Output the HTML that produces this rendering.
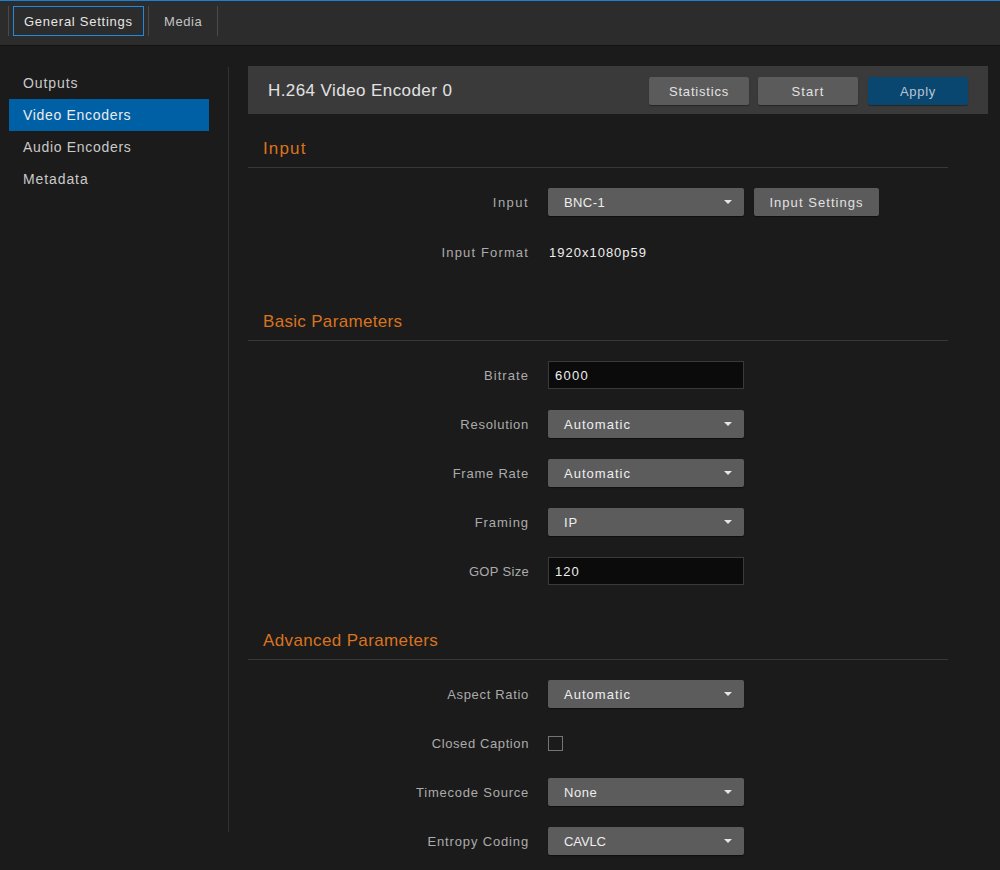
<!DOCTYPE html>
<html>
<head>
<meta charset="utf-8">
<style>
html,body{margin:0;padding:0;}
body{width:1000px;height:870px;overflow:hidden;background:#1b1b1b;position:relative;font-family:"Liberation Sans",sans-serif;}
.a{position:absolute;}
.topline{left:0;top:0;width:1000px;height:1px;background:#1b80d4;}
.hshadow{left:0;top:45px;width:1000px;height:1px;background:#131313;}
.header{left:0;top:1px;width:1000px;height:44px;background:#2c2c2c;}
.hdiv{top:6px;width:1px;height:30px;background:#4a4a4a;}
.tab{top:6px;height:30px;line-height:30px;font-size:13px;color:#e6e6e6;white-space:nowrap;}
.tab1{left:13px;width:129px;border:1px solid #1f8ae0;height:28px;line-height:28px;}
.side{left:9px;width:200px;height:32px;line-height:32px;font-size:14px;color:#c9c9c9;white-space:nowrap;}
.side span{position:absolute;left:14px;top:0;letter-spacing:0.9px;}
.side.act{background:#0060a6;color:#ececec;}
.vdiv{left:228px;top:67px;width:1px;height:765px;background:#333;}
.titlebar{left:248px;top:66px;width:740px;height:48px;background:#3a3a3a;}
.title{left:268px;top:67px;height:48px;line-height:48px;font-size:17px;color:#e2e2e2;letter-spacing:0.42px;white-space:nowrap;}
.btn{top:77px;width:100px;height:28px;line-height:28px;border-radius:2px;background:#5b5b5b;color:#e2e2e2;font-size:13px;text-align:center;white-space:nowrap;box-shadow:0 1px 1px rgba(0,0,0,.35);}
.btn span{letter-spacing:0.7px;position:relative;top:1px;}
.btn.apply{background:#0a4770;color:#b9c6d2;}
.h2{left:263px;font-size:17px;color:#d9731f;white-space:nowrap;letter-spacing:0.4px;height:20px;line-height:20px;}
.hline{left:248px;width:700px;height:1px;background:#383838;}
.lbl{margin-top:1px;right:471px;font-size:13px;color:#ababab;text-align:right;white-space:nowrap;letter-spacing:0.7px;height:28px;line-height:28px;}
.sel{left:548px;width:196px;height:28px;border-radius:2px;background:#5c5c5c;box-shadow:0 1px 1px rgba(0,0,0,.45);}
.sel span{position:absolute;left:16px;top:1px;line-height:28px;font-size:13px;color:#eeeeee;white-space:nowrap;letter-spacing:0.9px;}
.sel i{position:absolute;left:176px;top:12px;width:0;height:0;border-left:4px solid transparent;border-right:4px solid transparent;border-top:4px solid #e6e6e6;}
.inp{left:548px;width:194px;height:26px;border:1px solid #3a3a3a;background:#0b0b0b;}
.inp span{position:absolute;left:6px;top:1px;line-height:26px;font-size:13px;color:#eeeeee;white-space:nowrap;letter-spacing:1px;}
.val{left:549px;font-size:13px;color:#eeeeee;white-space:nowrap;letter-spacing:0.9px;height:28px;line-height:28px;}
.chk{left:548px;top:736px;width:13px;height:13px;border:1px solid #747474;}
.ibtn{left:754px;top:188px;width:125px;height:28px;line-height:28px;border-radius:2px;background:#5b5b5b;color:#e2e2e2;font-size:13px;text-align:center;white-space:nowrap;box-shadow:0 1px 1px rgba(0,0,0,.45);}
.ibtn span{letter-spacing:0.9px;position:relative;top:1px;}
</style>
</head>
<body>
<div class="a topline"></div>
<div class="a header"></div>
<div class="a hshadow"></div>
<div class="a hdiv" style="left:8px"></div>
<div class="a tab tab1"><span style="position:absolute;left:10px;top:1px;letter-spacing:0.75px">General Settings</span></div>
<div class="a hdiv" style="left:148px"></div>
<div class="a tab" style="top:7px;left:164px;letter-spacing:0.55px;color:#c4c4c4">Media</div>
<div class="a hdiv" style="left:217px"></div>

<div class="a side" style="top:67px"><span>Outputs</span></div>
<div class="a side act" style="top:99px"><span style="letter-spacing:0.69px">Video Encoders</span></div>
<div class="a side" style="top:131px"><span style="letter-spacing:0.69px">Audio Encoders</span></div>
<div class="a side" style="top:163px"><span>Metadata</span></div>
<div class="a vdiv"></div>

<div class="a titlebar"></div>
<div class="a title">H.264 Video Encoder 0</div>
<div class="a btn" style="left:649px"><span style="letter-spacing:0.81px">Statistics</span></div>
<div class="a btn" style="left:758px"><span style="letter-spacing:1.12px">Start</span></div>
<div class="a btn apply" style="left:868px"><span>Apply</span></div>

<div class="a h2" style="top:139px;letter-spacing:1.15px">Input</div>
<div class="a hline" style="top:167px"></div>
<div class="a lbl" style="top:188px;letter-spacing:1.45px">Input</div>
<div class="a sel" style="top:188px"><span style="letter-spacing:0.4px">BNC-1</span><i></i></div>
<div class="a ibtn"><span style="letter-spacing:1.05px">Input Settings</span></div>
<div class="a lbl" style="top:238px;letter-spacing:1.14px">Input Format</div>
<div class="a val" style="top:239px;letter-spacing:1.0px">1920x1080p59</div>

<div class="a h2" style="top:312px;letter-spacing:0.32px">Basic Parameters</div>
<div class="a hline" style="top:340px"></div>
<div class="a lbl" style="top:361px;letter-spacing:1.07px">Bitrate</div>
<div class="a inp" style="top:361px"><span style="letter-spacing:1.27px">6000</span></div>
<div class="a lbl" style="top:410px;letter-spacing:0.72px">Resolution</div>
<div class="a sel" style="top:410px"><span style="letter-spacing:1.02px">Automatic</span><i></i></div>
<div class="a lbl" style="top:459px;letter-spacing:0.77px">Frame Rate</div>
<div class="a sel" style="top:459px"><span style="letter-spacing:1.02px">Automatic</span><i></i></div>
<div class="a lbl" style="top:508px;letter-spacing:0.95px">Framing</div>
<div class="a sel" style="top:508px"><span style="letter-spacing:0.9px;left:16px">IP</span><i></i></div>
<div class="a lbl" style="top:557px;letter-spacing:0.31px">GOP Size</div>
<div class="a inp" style="top:557px"><span>120</span></div>

<div class="a h2" style="top:631px;letter-spacing:0.37px">Advanced Parameters</div>
<div class="a hline" style="top:659px"></div>
<div class="a lbl" style="top:680px;letter-spacing:0.68px">Aspect Ratio</div>
<div class="a sel" style="top:680px"><span style="letter-spacing:1.02px">Automatic</span><i></i></div>
<div class="a lbl" style="top:729px;letter-spacing:0.6px">Closed Caption</div>
<div class="a chk"></div>
<div class="a lbl" style="top:778px;letter-spacing:0.77px">Timecode Source</div>
<div class="a sel" style="top:778px"><span style="letter-spacing:0.57px">None</span><i></i></div>
<div class="a lbl" style="top:827px;letter-spacing:0.85px">Entropy Coding</div>
<div class="a sel" style="top:827px"><span style="letter-spacing:-0.1px">CAVLC</span><i></i></div>
</body>
</html>
